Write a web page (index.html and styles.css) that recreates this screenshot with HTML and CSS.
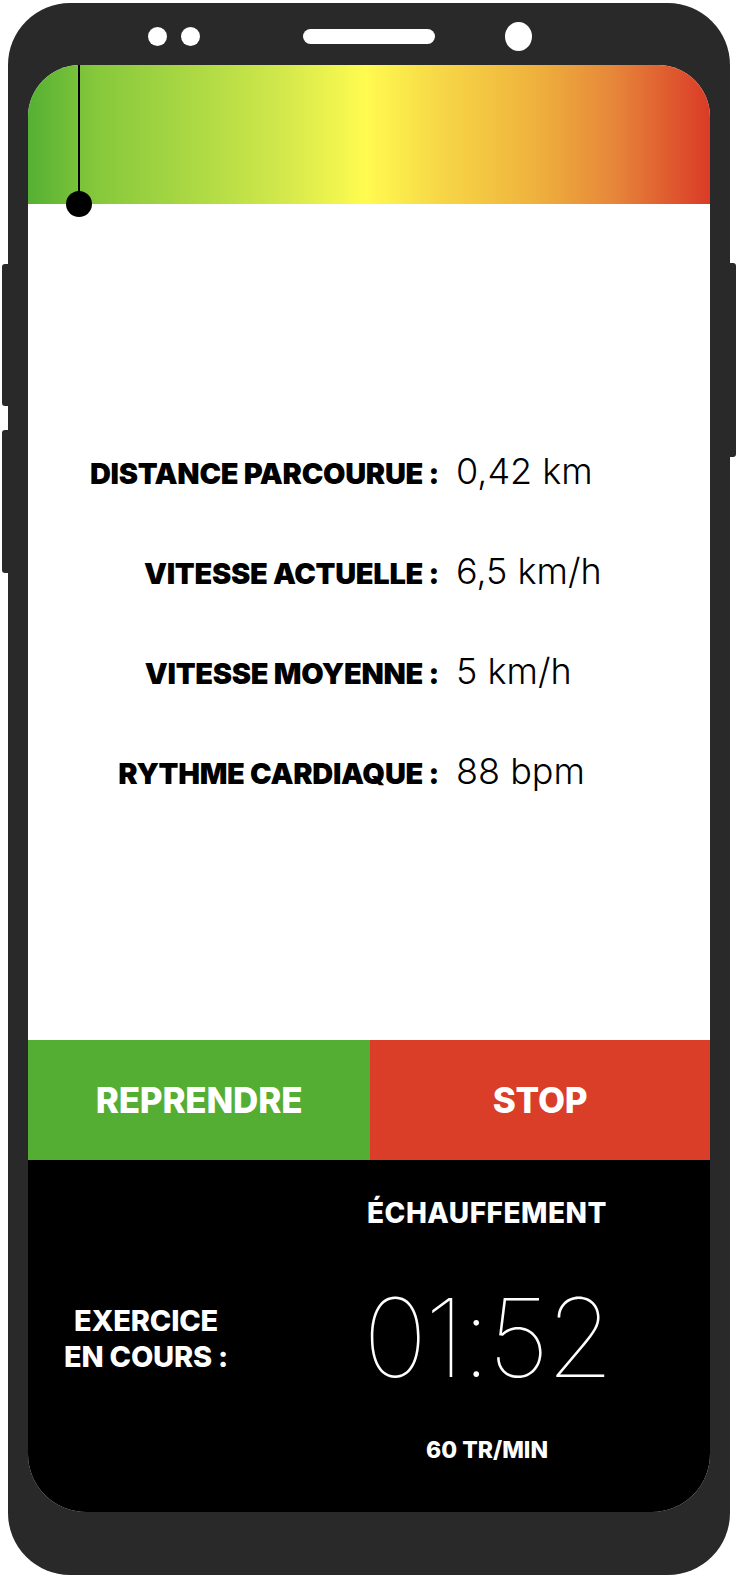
FILE: index.html
```html
<!DOCTYPE html>
<html lang="fr">
<head>
<meta charset="utf-8">
<title>Exercice en cours</title>
<link rel="stylesheet" href="styles.css">
</head>
<body>
<div class="device">
  <div class="rail rail-left">
    <span class="key key-l1"></span>
    <span class="key key-l2"></span>
  </div>
  <div class="phone">
    <div class="topbar">
      <span class="dot"></span>
      <span class="dot dot-second"></span>
      <span class="speaker"></span>
      <span class="camera"></span>
    </div>
    <div class="screen">
      <div class="gauge"><span class="marker"></span></div>
      <div class="stats">
        <div class="row"><span class="label">DISTANCE PARCOURUE :</span><span class="value">0,42 km</span></div>
        <div class="row"><span class="label">VITESSE ACTUELLE :</span><span class="value">6,5 km/h</span></div>
        <div class="row"><span class="label">VITESSE MOYENNE :</span><span class="value">5 km/h</span></div>
        <div class="row"><span class="label">RYTHME CARDIAQUE :</span><span class="value">88 bpm</span></div>
      </div>
      <div class="actions">
        <button class="btn btn-resume">REPRENDRE</button>
        <button class="btn btn-stop">STOP</button>
      </div>
      <div class="exercise">
        <div class="ex-left">EXERCICE<br>EN COURS :</div>
        <div class="ex-right">
          <div class="phase">ÉCHAUFFEMENT</div>
          <div class="timer">01:52</div>
          <div class="cadence">60 TR/MIN</div>
        </div>
      </div>
    </div>
  </div>
  <div class="rail rail-right">
    <span class="key key-r1"></span>
  </div>
</div>
</body>
</html>
```
FILE: styles.css
```css
html, body {
  margin: 0;
  padding: 0;
  background: #ffffff;
}

body {
  font-family: Inter, "Noto Sans", sans-serif;
}

.device {
  display: flex;
  padding-top: 3px;
  padding-left: 2px;
}

.rail {
  display: flex;
  flex-direction: column;
}

.rail-left {
  width: 6px;
}

.rail-right {
  width: 6px;
}

.key {
  display: block;
  background: #292929;
}

.key-l1 {
  margin-top: 261px;
  height: 142px;
  border-radius: 3px 0 0 3px;
}

.key-l2 {
  margin-top: 24px;
  height: 143px;
  border-radius: 3px 0 0 3px;
}

.key-r1 {
  margin-top: 260px;
  height: 194px;
  border-radius: 0 3px 3px 0;
}

.phone {
  width: 722px;
  height: 1572px;
  background: #292929;
  border-radius: 62px;
  display: flex;
  flex-direction: column;
}

.topbar {
  height: 62px;
  flex: none;
  display: flex;
  align-items: center;
  padding-top: 4px;
  padding-left: 140px;
  box-sizing: border-box;
}

.dot {
  width: 19px;
  height: 19px;
  border-radius: 50%;
  background: #ffffff;
}

.dot-second {
  margin-left: 14px;
}

.speaker {
  width: 132px;
  height: 15px;
  border-radius: 8px;
  background: #ffffff;
  margin-left: 103px;
}

.camera {
  width: 27px;
  height: 29px;
  border-radius: 50%;
  background: #ffffff;
  margin-left: 70px;
}

.screen {
  margin: 0 20px;
  height: 1447px;
  flex: none;
  background: #ffffff;
  border-radius: 52px 52px 58px 58px;
  overflow: hidden;
  display: flex;
  flex-direction: column;
}

.gauge {
  height: 139px;
  flex: none;
  position: relative;
  z-index: 2;
  background: linear-gradient(to right,
    #55b033 0%,
    #86c83c 10%,
    #b3dc45 27%,
    #d5e94c 38%,
    #fffb50 49.5%,
    #f7d847 60%,
    #efb33d 74%,
    #e6863a 86%,
    #da3b27 100%);
}

.marker {
  position: absolute;
  left: 50px;
  top: 0;
  width: 2px;
  height: 139px;
  background: #000000;
}

.marker::after {
  content: "";
  position: absolute;
  left: -12px;
  bottom: -13px;
  width: 26px;
  height: 26px;
  border-radius: 50%;
  background: #000000;
}

.stats {
  height: 836px;
  flex: none;
  box-sizing: border-box;
  padding-top: 249px;
  display: flex;
  flex-direction: column;
}

.row {
  height: 100px;
  display: flex;
  align-items: baseline;
}

.label {
  width: 411px;
  text-align: right;
  font-size: 29px;
  line-height: 29px;
  font-weight: 900;
  letter-spacing: -0.3px;
  color: #000000;
}

.value {
  margin-left: 17px;
  font-size: 36px;
  line-height: 36px;
  font-weight: 300;
  color: #000000;
}

.actions {
  height: 120px;
  flex: none;
  display: flex;
}

.btn {
  border: 0;
  margin: 0;
  padding: 0;
  font-family: Inter, "Noto Sans", sans-serif;
  font-size: 35px;
  font-weight: 800;
  letter-spacing: -0.2px;
  color: #ffffff;
}

.btn-resume {
  width: 342px;
  flex: none;
  background: #55ae34;
}

.btn-stop {
  flex: 1;
  background: #da3d28;
}

.exercise {
  flex: 1;
  background: #000000;
  display: flex;
  color: #ffffff;
}

.ex-left {
  width: 236px;
  flex: none;
  display: flex;
  flex-direction: column;
  justify-content: center;
  text-align: center;
  padding-top: 6px;
  box-sizing: border-box;
  font-size: 29px;
  line-height: 36px;
  font-weight: 800;
  letter-spacing: -0.2px;
}

.ex-right {
  flex: 1;
  display: flex;
  flex-direction: column;
  align-items: center;
  padding-top: 40px;
}

.phase {
  font-size: 28px;
  line-height: 27px;
  font-weight: 800;
  letter-spacing: 0.5px;
}

.timer {
  margin-top: 56px;
  font-size: 109px;
  line-height: 109px;
  font-weight: 100;
  letter-spacing: -3px;
}

.cadence {
  margin-top: 47px;
  font-size: 23px;
  line-height: 22px;
  font-weight: 800;
  letter-spacing: 0;
}
```
